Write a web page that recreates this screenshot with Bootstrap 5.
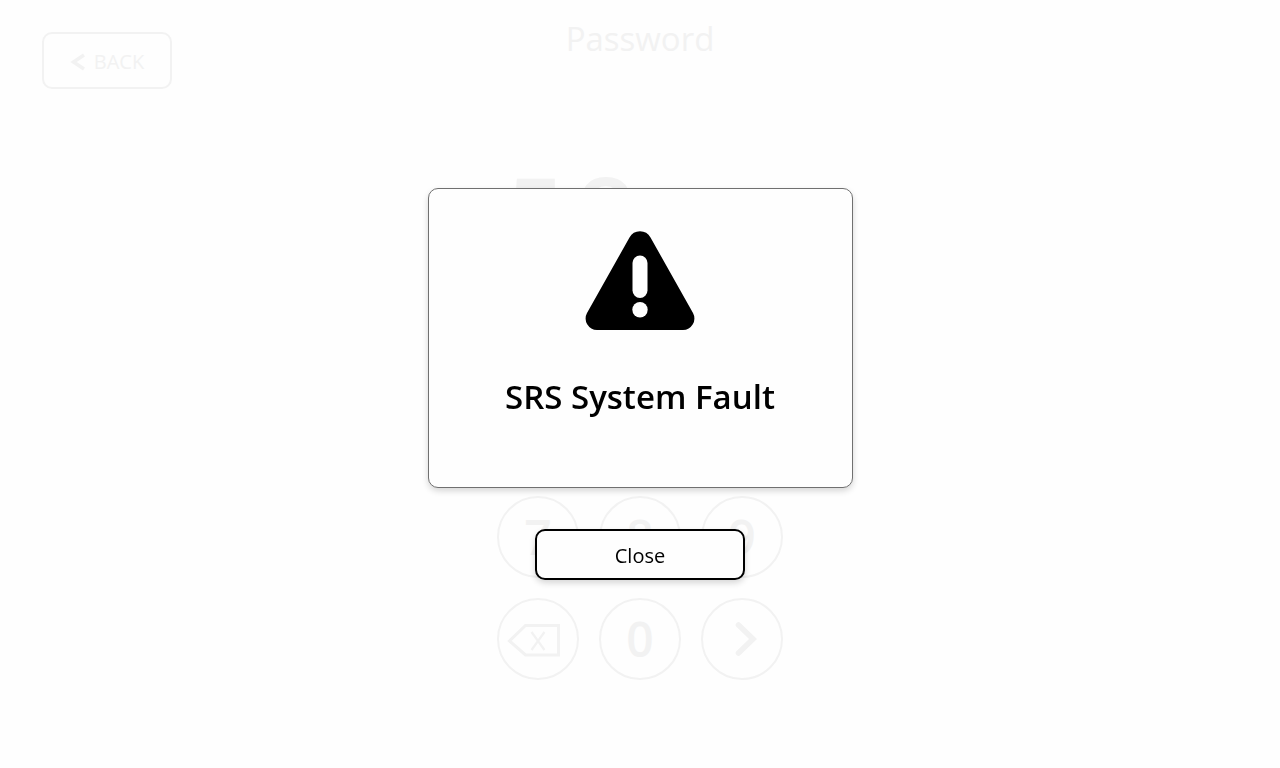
<!DOCTYPE html>
<html lang="en">
<head>
<meta charset="utf-8">
<meta name="viewport" content="width=device-width, initial-scale=1">
<title>Password</title>
<link href="https://cdn.jsdelivr.net/npm/bootstrap@5.3.0/dist/css/bootstrap.min.css" rel="stylesheet">
<style>
  body { font-family: "Open Sans", "Noto Sans", sans-serif; background: #fefefe; color: #000; }
  .screen { --ghost: #f2f2f2; color: var(--ghost); }
  .top-bar { display: grid; grid-template-columns: 1fr auto 1fr; padding: 0 42px; height: 152px; }
  .page-title { font-size: 33px; line-height: 40px; font-weight: 500; margin: 19px 0 0; }
  .back-btn { width: 130px; height: 57px; margin-top: 32px; border: 2px solid var(--ghost); border-radius: 10px; color: var(--ghost); font-size: 20px; font-weight: 500; padding: 2px 0 0; }
  .pad { width: 286px; }
  .entry { height: 344px; padding-left: 4px; font-size: 102px; line-height: 120px; font-weight: 600; }
  .digit { width: 70px; text-align: center; }
  .keys { display: grid; grid-template-columns: repeat(3, 82px); gap: 20px; }
  .key { width: 82px; height: 82px; border: 2px solid var(--ghost); color: var(--ghost); font-size: 48px; line-height: 48px; font-weight: 600; }
  .overlay { gap: 41px; }
  .fault-card { width: 425px; height: 300px; border: 1px solid #707070; border-radius: 10px; background: #fefefe; box-shadow: 0 3px 6px rgba(0,0,0,.16); padding-top: 42px; }
  .fault-title { font-size: 33px; line-height: 40px; font-weight: 600; margin: 46px 0 0; }
  .close-btn { width: 210px; height: 51px; border: 2px solid #000; border-radius: 10px; background: #fefefe; color: #000; font-size: 20px; font-weight: 500; padding: 2px 0 0; box-shadow: 0 3px 6px rgba(0,0,0,.16); }
</style>
</head>
<body>
<main class="screen min-vh-100 d-flex flex-column align-items-center">
  <header class="top-bar w-100">
    <div>
      <button type="button" class="back-btn btn d-flex align-items-center justify-content-center gap-2">
        <svg width="16" height="18" viewBox="0 0 16 18" fill="none" stroke="currentColor" stroke-width="3.5" aria-hidden="true"><path d="M14 2 3.500 9 14 16"/></svg>
        <span>BACK</span>
      </button>
    </div>
    <h1 class="page-title">Password</h1>
  </header>
  <section class="pad">
    <div class="entry d-flex">
      <span class="digit">5</span>
      <span class="digit">8</span>
    </div>
    <div class="keys">
      <button type="button" class="key btn rounded-circle p-0">7</button>
      <button type="button" class="key btn rounded-circle p-0">8</button>
      <button type="button" class="key btn rounded-circle p-0">9</button>
      <button type="button" class="key btn rounded-circle p-0" aria-label="Delete">
        <svg class="d-block" width="78" height="78" viewBox="499 600 78 78" fill="none" stroke="currentColor" stroke-width="3" aria-hidden="true"><path d="M525.500 625.500h33v29.500h-33L509.500 641z"/><path stroke-width="2.200" d="m531.500 632 13 18m0-18-13 18"/></svg>
      </button>
      <button type="button" class="key btn rounded-circle p-0">0</button>
      <button type="button" class="key btn rounded-circle p-0" aria-label="Enter">
        <svg class="d-block" width="78" height="78" viewBox="703 600 78 78" fill="none" stroke="currentColor" stroke-width="5.500" stroke-linecap="round" aria-hidden="true"><path d="m738.500 625 14.500 14-14.500 14"/></svg>
      </button>
    </div>
  </section>
</main>
<div class="overlay position-fixed top-0 start-0 w-100 h-100 d-flex flex-column align-items-center justify-content-center" role="dialog" aria-modal="true" aria-labelledby="fault">
  <div class="fault-card d-flex flex-column align-items-center">
    <svg class="flex-shrink-0" width="110" height="100" viewBox="0 0 110 100" aria-hidden="true">
      <path d="M44.500 6.500a12 12 0 0 1 21 0L108 82a11.500 11.500 0 0 1-10 17H12A11.500 11.500 0 0 1 2 82z"/>
      <rect x="47.500" y="24.500" width="15" height="42.500" rx="7.500" fill="#fefefe"/><circle cx="55" cy="78.800" r="7.700" fill="#fefefe"/>
    </svg>
    <h2 class="fault-title" id="fault">SRS System Fault</h2>
  </div>
  <button type="button" class="close-btn btn">Close</button>
</div>
<script src="https://cdn.jsdelivr.net/npm/bootstrap@5.3.0/dist/js/bootstrap.bundle.min.js"></script>
</body>
</html>
